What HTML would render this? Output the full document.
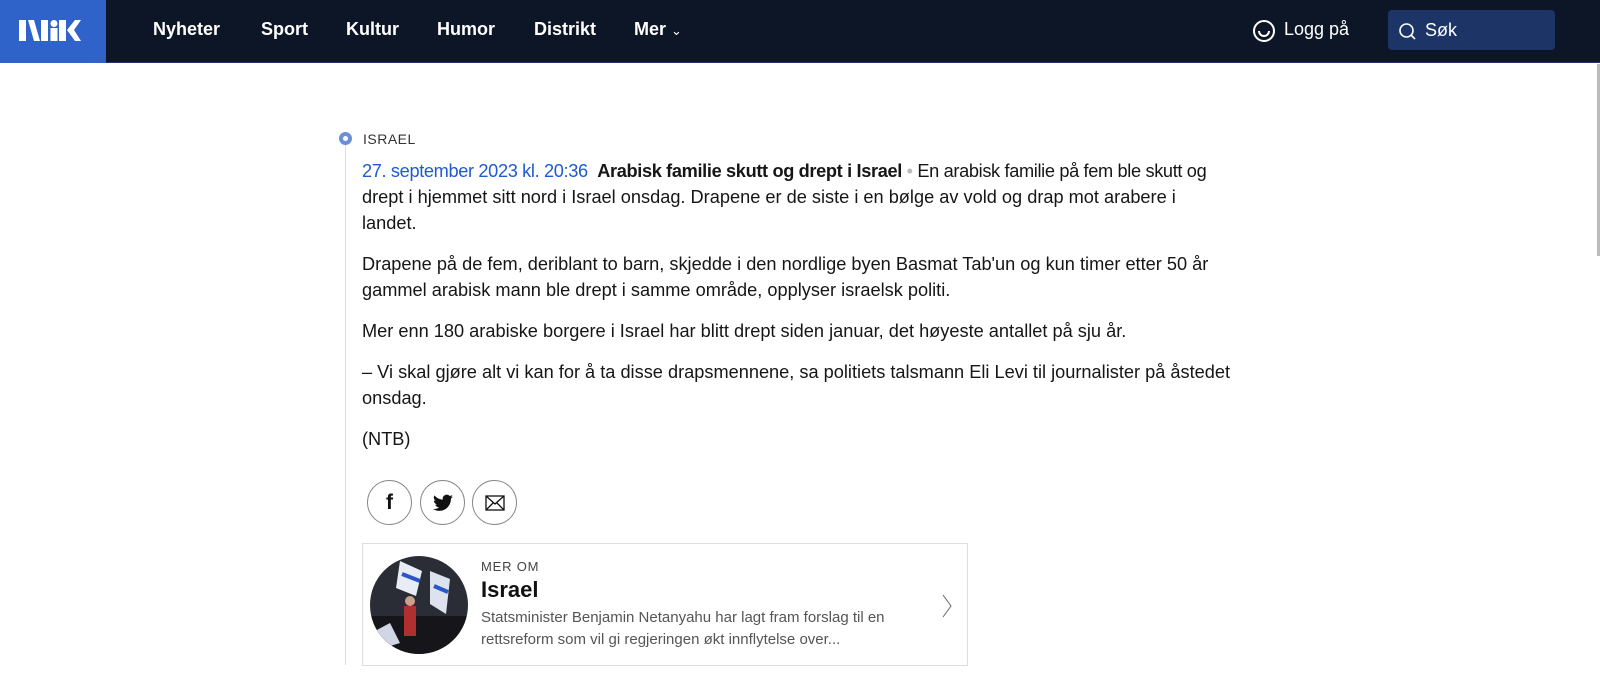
<!DOCTYPE html>
<html><head><meta charset="utf-8"><style>
*{margin:0;padding:0;box-sizing:border-box}
body{width:1600px;height:694px;overflow:hidden;background:#fff;font-family:"Liberation Sans",sans-serif;color:#161616;position:relative}
.top{position:absolute;left:0;top:0;width:1600px;height:63px;background:#0d1626;border-bottom:1px solid #2b2d6e}
.logo{position:absolute;left:0;top:0;width:106px;height:63px;background:#3063c9}
.nav a{position:absolute;top:19px;color:#fff;font-weight:bold;font-size:18px;text-decoration:none}
.search{position:absolute;left:1388px;top:10px;width:167px;height:40px;background:#1c3566;border-radius:4px}
.p{position:absolute;left:362px;font-size:18.2px;line-height:26px;color:#161616;white-space:nowrap}
.rule{position:absolute;left:345px;top:145px;width:1px;height:520px;background:#ddd}
.dot{position:absolute;left:339px;top:132px;width:13px;height:13px;border-radius:50%;background:#6d8fd7}
.dot:after{content:"";position:absolute;left:4px;top:4px;width:5px;height:5px;border-radius:50%;background:#fff}
.btn{position:absolute;top:480px;width:45px;height:45px;border:1px solid #888;border-radius:50%;background:#fff}
.card{position:absolute;left:362px;top:543px;width:606px;height:123px;border:1px solid #ddd}
</style></head><body>
<div class="top">
<div class="logo"><svg width="106" height="63"><g fill="#fff"><rect x="19" y="20" width="7" height="21"/><path d="M28 20h6l6 21h-6z"/><rect x="41" y="20" width="7" height="21"/><circle cx="54" cy="23.5" r="3.5"/><rect x="50.5" y="28" width="7" height="13"/><rect x="59" y="20" width="7" height="21"/><path d="M67 30l8-10h6l-7 10 7 11h-6z"/></g></svg></div>
<div class="nav"><a style="left:153px">Nyheter</a><a style="left:261px">Sport</a><a style="left:346px">Kultur</a><a style="left:437px">Humor</a><a style="left:534px">Distrikt</a><a style="left:634px">Mer <span style="font-weight:normal;font-size:13px">&#8964;</span></a></div>
<svg style="position:absolute;left:1252px;top:19px" width="24" height="24"><circle cx="12" cy="12" r="10" fill="none" stroke="#fff" stroke-width="2"/><path d="M7 12a5 5 0 0 0 10 0" fill="none" stroke="#fff" stroke-width="2"/></svg>
<span style="position:absolute;left:1284px;top:19px;color:#fff;font-size:18px">Logg på</span>
<div class="search"><svg style="position:absolute;left:10px;top:12px" width="20" height="20"><circle cx="8.5" cy="8.5" r="6.5" fill="none" stroke="#fff" stroke-width="1.6"/><path d="M13 13l4 4" stroke="#fff" stroke-width="1.6"/></svg><span style="position:absolute;left:37px;top:10px;color:#fff;font-size:18px">Søk</span></div>
</div>
<div style="position:absolute;left:1597px;top:64px;width:3px;height:192px;background:#bbb"></div>
<div class="rule"></div><div class="dot"></div>
<div style="position:absolute;left:363px;top:131px;font-size:14px;letter-spacing:.5px;color:#333">ISRAEL</div>
<div class="p" style="top:158px"><span style="letter-spacing:-0.35px"><span style="color:#1f5ad1">27. september 2023 kl. 20:36</span>&nbsp; <b>Arabisk familie skutt og drept i Israel</b> <span style="color:#bbb">•</span> En arabisk familie på fem ble skutt og</span><br>drept i hjemmet sitt nord i Israel onsdag. Drapene er de siste i en bølge av vold og drap mot arabere i<br>landet.</div>
<div class="p" style="top:251px">Drapene på de fem, deriblant to barn, skjedde i den nordlige byen Basmat Tab'un og kun timer etter 50 år<br>gammel arabisk mann ble drept i samme område, opplyser israelsk politi.</div>
<div class="p" style="top:318px">Mer enn 180 arabiske borgere i Israel har blitt drept siden januar, det høyeste antallet på sju år.</div>
<div class="p" style="top:359px">– Vi skal gjøre alt vi kan for å ta disse drapsmennene, sa politiets talsmann Eli Levi til journalister på åstedet<br>onsdag.</div>
<div class="p" style="top:426px">(NTB)</div>
<div class="btn" style="left:367px"><span style="position:absolute;left:0;width:43px;text-align:center;top:10px;font-size:21px;font-weight:bold;color:#111">f</span></div>
<div class="btn" style="left:420px"><svg style="position:absolute;left:12px;top:13px" width="20" height="18" viewBox="0 0 24 20"><path fill="#111" d="M24 2.4a10 10 0 0 1-2.8.8A5 5 0 0 0 23.3.4a10 10 0 0 1-3.1 1.2A4.9 4.9 0 0 0 11.8 6 14 14 0 0 1 1.7.9a4.9 4.9 0 0 0 1.5 6.6A4.9 4.9 0 0 1 1 6.9a4.9 4.9 0 0 0 3.9 4.8 4.9 4.9 0 0 1-2.2.1 4.9 4.9 0 0 0 4.6 3.4A9.9 9.9 0 0 1 0 17.2 14 14 0 0 0 7.5 19.4c9.1 0 14-7.5 14-14v-.6A10 10 0 0 0 24 2.4z"/></svg></div>
<div class="btn" style="left:472px"><svg style="position:absolute;left:12px;top:14px" width="20" height="16"><rect x="1" y="1" width="18" height="14" fill="none" stroke="#111" stroke-width="1.3"/><path d="M1 1l9 8 9-8M1 15l7-7M19 15l-7-7" fill="none" stroke="#111" stroke-width="1.3"/></svg></div>
<div class="card">
<svg style="position:absolute;left:7px;top:12px" width="98" height="98"><defs><clipPath id="c"><circle cx="49" cy="49" r="49"/></clipPath></defs><g clip-path="url(#c)"><rect width="98" height="98" fill="#2a2d35"/><rect y="60" width="98" height="38" fill="#15151a"/><path d="M30 5l22 10-6 25-20-8z" fill="#e8ecf5"/><path d="M32 18l18 7" stroke="#2a56c8" stroke-width="4"/><path d="M60 15l20 8-4 35-16-10z" fill="#dde3ee"/><path d="M64 30l14 6" stroke="#2a56c8" stroke-width="4"/><rect x="34" y="50" width="12" height="30" fill="#b03030"/><circle cx="40" cy="45" r="5" fill="#c9a28a"/><path d="M5 75l15-8 10 20-20 6z" fill="#d0d6e4"/></g></svg>
<div style="position:absolute;left:118px;top:15px;font-size:13px;letter-spacing:.8px;color:#444">MER OM</div>
<div style="position:absolute;left:118px;top:33px;font-size:22px;font-weight:bold;color:#111">Israel</div>
<div style="position:absolute;left:118px;top:63px;font-size:15px;line-height:22px;color:#555;white-space:nowrap">Statsminister Benjamin Netanyahu har lagt fram forslag til en<br>rettsreform som vil gi regjeringen økt innflytelse over...</div>
<svg style="position:absolute;left:578px;top:50px" width="12" height="24"><path d="M2 1l8 11-8 11" fill="none" stroke="#666" stroke-width="1"/></svg>
</div>
</body></html>
